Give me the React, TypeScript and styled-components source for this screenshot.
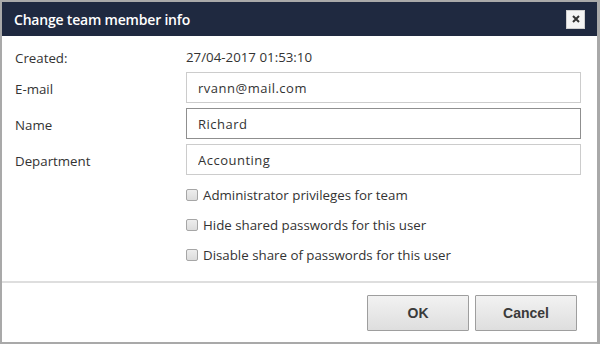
import styled, { createGlobalStyle } from 'styled-components';

const GlobalStyle = createGlobalStyle`
  html, body {
    margin: 0;
    padding: 0;
    background: #ffffff;
  }
  * {
    box-sizing: border-box;
  }
`;

const fields = [
  { label: 'E-mail', value: 'rvann@mail.com', focused: false },
  { label: 'Name', value: 'Richard', focused: true },
  { label: 'Department', value: 'Accounting', focused: false },
];

const options = [
  'Administrator privileges for team',
  'Hide shared passwords for this user',
  'Disable share of passwords for this user',
];

const App = (): JSX.Element => {
  return (
    <>
      <GlobalStyle />
      <Dialog>
        <Header>
          <Title>Change team member info</Title>
          <CloseButton aria-label="Close">
            <svg width="8" height="8" viewBox="0 0 8 8">
              <path d="M1 1 L7 7 M7 1 L1 7" stroke="#333" strokeWidth="2" />
            </svg>
          </CloseButton>
        </Header>

        <Body>
          <Form>
            <Label>Created:</Label>
            <StaticValue>27/04-2017 01:53:10</StaticValue>

            {fields.map((f) => (
              <FieldRow key={f.label}>
                <Label>{f.label}</Label>
                <Input defaultValue={f.value} focused={f.focused} />
              </FieldRow>
            ))}
          </Form>

          <Options>
            {options.map((o) => (
              <CheckRow key={o}>
                <Box type="checkbox" />
                <span>{o}</span>
              </CheckRow>
            ))}
          </Options>
        </Body>

        <Footer>
          <Button>OK</Button>
          <Button>Cancel</Button>
        </Footer>
      </Dialog>
    </>
  );
};

const Dialog = styled.div`
  width: 600px;
  height: 344px;
  border: 2px solid #a9a9a9;
  border-right-width: 3px;
  display: flex;
  flex-direction: column;
  background: #fff;
  font-family: 'Open Sans', 'Liberation Sans', sans-serif;
  color: #333;
`;
const Header = styled.div`
  height: 34px;
  background: #1f2940;
  display: flex;
  align-items: center;
  justify-content: space-between;
  padding: 0 12px 0 12px;
`;
const Title = styled.div`
  color: #fff;
  font-size: 14px;
  font-weight: 600;
  letter-spacing: -0.2px;
`;
const CloseButton = styled.div`
  width: 19px;
  height: 19px;
  background: #f4f4f4;
  border: 1px solid #cfcfcf;
  display: flex;
  align-items: center;
  justify-content: center;
`;
const Body = styled.div`
  flex: 1;
  padding: 11px 16px 0 13px;
`;
const Form = styled.div`
  display: grid;
  grid-template-columns: 171px 1fr;
  row-gap: 5px;
`;
const FieldRow = styled.div`
  display: contents;
`;
const Label = styled.div`
  font-size: 13.3px;
  display: flex;
  align-items: center;
  min-height: 20px;
  padding-top: 2px;
`;
const StaticValue = styled.div`
  font-size: 13.3px;
  display: flex;
  align-items: center;
`;
const Input = styled.input<{ focused?: boolean }>`
  height: 31px;
  width: 100%;
  border: 1px solid ${({ focused }) => (focused ? '#8f8f8f' : '#cccccc')};
  background: #fff;
  padding: 0 11px;
  font-family: 'Open Sans', 'Liberation Sans', sans-serif;
  font-size: 13px;
  letter-spacing: 0.5px;
  color: #333;
  outline: none;
`;
const Options = styled.div`
  display: flex;
  flex-direction: column;
  gap: 10px;
  padding: 10px 0 0 171px;
`;
const CheckRow = styled.label`
  display: flex;
  align-items: center;
  gap: 5px;
  font-size: 13.3px;
  height: 20px;
`;
const Box = styled.input`
  appearance: none;
  flex: none;
  width: 12px;
  height: 12px;
  margin: 0;
  border: 1px solid #a6a6a6;
  border-radius: 2px;
  background: linear-gradient(#ededed, #dcdcdc);
`;
const Footer = styled.div`
  border-top: 2px solid #dedede;
  height: 61px;
  display: flex;
  justify-content: flex-end;
  align-items: flex-start;
  gap: 6px;
  padding: 12px 20px 0 0;
`;
const Button = styled.button`
  width: 102px;
  height: 36px;
  border: 1px solid #9e9e9e;
  border-radius: 1px;
  background: linear-gradient(#f2f2f2, #dedede);
  font-family: 'Liberation Sans', Arial, sans-serif;
  font-size: 14px;
  font-weight: bold;
  color: #3a3a3a;
`;

export default App;
